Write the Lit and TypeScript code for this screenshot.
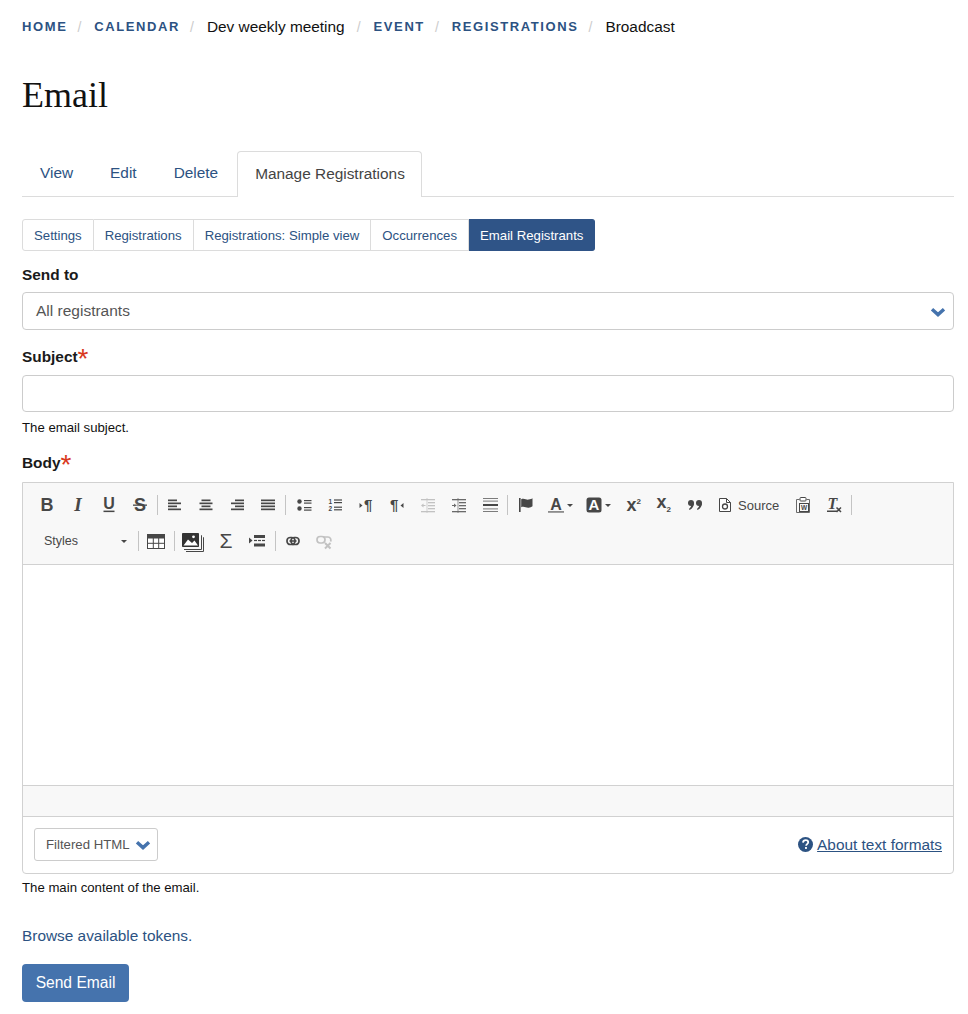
import { LitElement, html, css, svg } from "lit";
import { customElement } from "lit/decorators.js";

const ic = (body: unknown, w = 16, h = 16) => html`<svg class="ic" width=${w} height=${h} viewBox="0 0 ${w} ${h}">${body}</svg>`;
const bars = (rows: [number, number][], op = 1) => svg`<g fill="#474747" opacity=${op}>${rows.map(([x, w], i) => svg`<rect x=${x} y=${2.5 + i * 3} width=${w} height="1.7"/>`)}</g>`;
const chev = html`<svg class="chev" width="16" height="11" viewBox="0 0 16 11"><path d="M2 3.2 L8 8.6 L14 3.2" fill="none" stroke="#4573ad" stroke-width="3.4"/></svg>`;

const glyph = (t: string, cls: string, x = 8, y = 14) => svg`<text class=${cls} x=${x} y=${y} text-anchor="middle">${t}</text>`;

const indentLines = (op: number, arrowRight: boolean) => svg`<g opacity=${op} fill="#474747">
  <rect x="1" y="2" width="14" height="1.3"/><rect x="8" y="5" width="7" height="1.3"/><rect x="8" y="8" width="7" height="1.3"/><rect x="8" y="11" width="7" height="1.3"/><rect x="1" y="14" width="14" height="1.3"/>
  <rect x="6.500" y="1" width="1" height="15" opacity=".7"/>
  <path d=${arrowRight ? "M1 7.900h2V6.500l2.500 2-2.500 2V9.100H1z" : "M5.500 7.900h-2V6.500l-2.500 2 2.500 2V9.100h2z"}/>
</g>`;

const icons = {
  bold: ic(glyph("B", "t-b")),
  italic: ic(glyph("I", "t-i")),
  underline: ic(svg`<text class="t-u" x="8" y="11.500" text-anchor="middle">U</text><rect x="2.500" y="13.600" width="11" height="1.500" fill="#474747"/>`),
  strike: ic(svg`<text class="t-b" x="8" y="14" text-anchor="middle">S</text><rect x="1" y="7.500" width="14" height="1.300" fill="#474747"/>`),
  left: ic(bars([[1, 9], [1, 13], [1, 9], [1, 13]])),
  center: ic(bars([[3.500, 9], [1.500, 13], [3.500, 9], [1.500, 13]])),
  right: ic(bars([[6, 9], [2, 13], [6, 9], [2, 13]])),
  justify: ic(bars([[1, 14], [1, 14], [1, 14], [1, 14]])),
  ul: ic(svg`<g fill="#474747"><circle cx="3.500" cy="4.500" r="2.200"/><circle cx="3.500" cy="11.500" r="2.200"/><rect x="8" y="3" width="7.500" height="1.200"/><rect x="8" y="5.500" width="7.500" height="1.200"/><rect x="8" y="10" width="7.500" height="1.200"/><rect x="8" y="12.500" width="7.500" height="1.200"/></g>`),
  ol: ic(svg`<text class="t-n" x="1.500" y="7.400">1</text><text class="t-n" x="1.500" y="14">2</text><g fill="#474747"><rect x="7" y="2.400" width="8" height="1.200"/><rect x="7" y="5" width="8" height="1.200"/><rect x="7" y="9.600" width="8" height="1.200"/><rect x="7" y="12.200" width="8" height="1.200"/></g>`),
  ltr: ic(svg`<path d="M1.500 6l3 2.500-3 2.500z" fill="#474747"/><text class="t-p" x="6" y="13">¶</text>`),
  rtl: ic(svg`<text class="t-p" x="1" y="13">¶</text><path d="M14.500 6l-3 2.500 3 2.500z" fill="#474747"/>`),
  outdent: ic(indentLines(0.3, false)),
  indent: ic(indentLines(0.8, true)),
  hr: ic(svg`<g fill="#474747"><rect x="1" y="1" width="15" height="1" opacity=".7"/><rect x="1" y="3.600" width="15" height="1" opacity=".7"/><rect x="1" y="7" width="15" height="2"/><rect x="1" y="11.400" width="15" height="1" opacity=".7"/><rect x="1" y="14" width="15" height="1" opacity=".7"/></g>`),
  flag: ic(svg`<g fill="#474747"><rect x="1" y="1" width="1.600" height="14"/><path d="M3.200 2.200c3-1.600 5 1 7.500 .4 1.600-.4 3-.8 3.800-1.400v8c-1 .8-2.400 1.300-3.800 1.500-2.500 .4-4.500-1.900-7.500-.5z"/></g>`),
  color: ic(svg`<text class="t-a" x="8" y="12.500" text-anchor="middle">A</text><rect x="0" y="14" width="16" height="1.800" fill="#8c8c8c"/>`),
  bg: ic(svg`<rect x=".5" y=".5" width="15" height="15" rx="2.500" fill="#474747"/><text class="t-aw" x="8" y="13" text-anchor="middle">A</text>`),
  sup: ic(svg`<text class="t-x" x="1.500" y="14">x</text><text class="t-s" x="11.500" y="7">2</text>`),
  sub: ic(svg`<text class="t-x" x=".5" y="11">x</text><text class="t-s" x="10.500" y="15">2</text>`),
  quote: ic(svg`<g fill="#474747"><circle cx="4" cy="6" r="3"/><path d="M7 6c0 3.200-1.500 5.300-4.300 7l-.8-1c1.500-1.100 2.500-2.700 2.200-4z"/><circle cx="12" cy="6" r="3"/><path d="M15 6c0 3.200-1.500 5.300-4.300 7l-.8-1c1.500-1.100 2.500-2.700 2.200-4z"/></g>`),
  source: ic(svg`<path d="M2.500 1.500h7l4 4v9h-11z" fill="#fff" stroke="#474747"/><circle cx="8" cy="9.500" r="2.500" fill="none" stroke="#474747" stroke-width="1.300"/><path d="M9.500 1.500v4h4" fill="none" stroke="#474747"/>`),
  paste: ic(svg`<path d="M4.500 2.500H1.500v13h13v-13h-3" fill="none" stroke="#6a6a6a"/><rect x="5" y=".5" width="6" height="3.500" rx=".8" fill="#fff" stroke="#474747"/><rect x="4.500" y="6.500" width="9" height="8" fill="#f8f8f8" stroke="#474747"/><text class="t-w" x="9" y="13" text-anchor="middle">W</text>`),
  clear: ic(svg`<text class="t-i2" x="6.500" y="12" text-anchor="middle">T</text><rect x="1" y="13.500" width="10" height="1.500" fill="#474747"/><path d="M10.500 10.500l4.500 4.500m0-4.500l-4.500 4.500" stroke="#474747" stroke-width="1.500"/>`),
  table: ic(svg`<rect x=".5" y="1.500" width="17" height="14" fill="#fff" stroke="#474747"/><rect x="0" y="1" width="18" height="4.500" fill="#474747"/><path d="M6.300 5v10M11.700 5v10M1 10.300h16" stroke="#474747"/>`, 18, 16),
  image: ic(svg`<path d="M19 5.500h.5V19.500H2M21 7.500h.5V21.500H4" fill="none" stroke="#474747"/><rect x="0" y="3" width="17" height="14" rx=".8" fill="#333"/><path d="M1.500 15.500l4.500-6 4 3.500 2.500-2.500 3.500 5z" fill="#fff"/><circle cx="11.500" cy="6.800" r="1.400" fill="#fff"/>`, 23, 22),
  sigma: ic(glyph("Σ", "t-sig", 9, 15.500), 18, 18),
  embed: ic(svg`<path d="M0 4.500l3.500 3-3.500 3z" fill="#474747"/><g fill="#474747"><rect x="5" y="2" width="11" height="3"/><rect x="5" y="6.900" width="3" height="1.200"/><rect x="9" y="6.900" width="3" height="1.200"/><rect x="13" y="6.900" width="3" height="1.200"/><rect x="5" y="10.500" width="11" height="3"/></g>`),
  link: ic(svg`<rect x="2" y="4.500" width="8" height="7" rx="3.300" fill="none" stroke="#474747" stroke-width="1.700"/><rect x="6" y="4.500" width="8" height="7" rx="3.300" fill="none" stroke="#474747" stroke-width="1.700"/><rect x="4.500" y="7.200" width="7" height="1.600" fill="#474747"/>`),
  unlink: ic(svg`<g opacity=".3"><rect x="1" y="3.500" width="8" height="6.500" rx="3.200" fill="none" stroke="#474747" stroke-width="1.700"/><path d="M7 4h5a3 3 0 0 1 2.500 4.500" fill="none" stroke="#474747" stroke-width="1.700"/><path d="M9 10l5.500 5.500m0-5.500L9 15.500" stroke="#474747" stroke-width="2"/></g>`),
};

@customElement("app-root")
export class AppRoot extends LitElement {
  static styles = css`
    :host { display: block; font-family: "Liberation Sans", Arial, sans-serif; color: #111; background: #fff; }
    * { box-sizing: border-box; }
    a { color: #2c5282; text-decoration: none; }
    .page { padding: 18px 14px 12px 22px; height: 1014px; overflow: hidden; }

    .crumbs { display: flex; align-items: center; height: 18px; font-size: 15.400px; line-height: 18px; }
    .crumbs a { font-size: 13px; font-weight: 700; letter-spacing: 1.600px; text-transform: uppercase; }
    .crumbs .sep { color: #ccc; font-size: 14px; margin: 0 13px 0 10px; }
    .crumbs .cur { margin-right: 2px; }
    h1 { margin: 32px 0 0; height: 54px; font: 400 36px/54px "Liberation Serif", serif; color: #111; }

    .primary { display: flex; height: 46px; margin-top: 29px; border-bottom: 1px solid #dcdcdc; font-size: 15.400px; }
    .primary a { display: block; padding: 0 19px 0 18px; line-height: 44px; }
    .primary a.active { color: #444; background: #fff; border: 1px solid #dcdcdc; border-bottom: 0; border-radius: 4px 4px 0 0; height: 46px; padding: 0 16.500px 0 17px; }

    .secondary { display: flex; margin-top: 22px; height: 32px; width: max-content; font-size: 13.200px; }
    .secondary a { display: block; padding: 0 11px; line-height: 31px; border: 1px solid #dcdcdc; border-left: 0; }
    .secondary a:first-child { border-left: 1px solid #dcdcdc; border-radius: 3px 0 0 3px; }
    .secondary a.active { background: #2f5487; border-color: #2f5487; color: #fff; border-radius: 0 3px 3px 0; }

    label { display: block; font-size: 15.400px; font-weight: 700; line-height: 18px; color: #1a1a1a; }
    .req { color: #d9381e; font-size: 28px; font-weight: 400; line-height: 0; vertical-align: -6px; margin-left: 0; }
    .send { margin-top: 15px; }
    .select { display: flex; align-items: center; justify-content: space-between; height: 38px; margin-top: 8px; padding: 0 7px 0 13px; border: 1px solid #ccc; border-radius: 4px; font-size: 15.500px; line-height: 16px; color: #555; }
    .subj { margin-top: 18px; }
    .input { height: 37px; margin-top: 9px; border: 1px solid #ccc; border-radius: 4px; }
    .help { font-size: 13.200px; line-height: 16px; color: #111; }
    .help.a { margin-top: 8px; }
    .bodyl { margin-top: 18px; }

    .editor { margin-top: 10px; height: 392px; border: 1px solid #d1d1d1; border-radius: 0 0 4px 4px; display: flex; flex-direction: column; }
    .toolbar { height: 82px; flex: none; background: #f8f8f8; border-bottom: 1px solid #d1d1d1; padding: 4px 0 0 8px; }
    .row { display: flex; align-items: center; height: 36px; }
    .b { display: flex; align-items: center; justify-content: center; width: 31px; height: 36px; color: #474747; flex: none; }
    .s { width: 1px; height: 20px; background: #c4c4c4; margin: 0 1.500px; flex: none; }
    .s.m { margin: 0 2.500px 0 1.500px; }
    .s.l { margin: 0 2.500px 0 1.500px; }
    .ic { display: block; flex: none; overflow: visible; }
    .ic text { fill: #474747; font-family: "Liberation Sans", sans-serif; }
    .ic .t-b { font-size: 18px; font-weight: 700; }
    .ic .t-u { font-size: 16px; font-weight: 700; }
    .ic .t-i { font-family: "Liberation Serif", serif; font-style: italic; font-weight: 700; font-size: 19px; }
    .ic .t-n { font-size: 6.500px; font-weight: 700; }
    .ic .t-p { font-size: 15px; font-weight: 700; }
    .ic .t-a { font-size: 16px; font-weight: 700; }
    .ic .t-aw { font-size: 15px; font-weight: 700; fill: #fff; }
    .ic .t-x { font-size: 18px; font-weight: 700; }
    .ic .t-s { font-size: 8px; font-weight: 700; }
    .ic .t-w { font-size: 6.500px; font-weight: 700; }
    .ic .t-i2 { font-family: "Liberation Serif", serif; font-style: italic; font-weight: 700; font-size: 16px; }
    .ic .t-sig { font-size: 21px; font-weight: 400; }
    .w { display: flex; align-items: center; height: 36px; color: #474747; flex: none; }
    .caret { width: 0; height: 0; border: 3px solid transparent; border-top: 3px solid #474747; border-bottom: 0; margin-left: 3px; }
    .cw { width: 39px; }
    .cw2 { width: 37px; }
    .srcw { padding-left: 7px; width: 77px; }
    .sigw { width: 42px; margin-right: 1px; }
    .embw { width: 18px; }
    .src { font-size: 13px; margin-left: 5px; color: #474747; }
    .styles { display: flex; align-items: center; justify-content: space-between; width: 98px; padding: 0 2px 0 13px; height: 36px; font-size: 12.500px; color: #474747; flex: none; }
    .sep2a { margin: 0 8px 0 9px; }
    .sep2b { margin: 0 7px 0 9px; }
    .sep2c { margin: 0 1px 0 9px; }
    .content { flex: 1; background: #fff; }
    .foot { height: 32px; flex: none; background: #f8f8f8; border-top: 1px solid #d1d1d1; border-bottom: 1px solid #d1d1d1; }
    .formats { flex: none; height: 56px; display: flex; align-items: flex-start; justify-content: space-between; padding: 11px 11px 0; }
    .fsel { display: flex; align-items: center; gap: 5px; height: 33px; width: 124px; padding: 0 0 0 11px; border: 1px solid #ccc; border-radius: 3px; font-size: 13.200px; color: #555; white-space: nowrap; }
    .about { display: flex; align-items: center; gap: 4px; height: 33px; font-size: 15.400px; }
    .about a { text-decoration: underline; }
    .help.b2 { margin-top: 6px; }
    .tokens { display: block; margin-top: 31px; font-size: 15.400px; line-height: 18px; }
    .btn { display: flex; align-items: center; justify-content: center; width: 107px; height: 38px; margin-top: 19px; background: #4573ad; border-radius: 4px; color: #fff; font-size: 15.600px; }
  `;

  private btn(i: unknown) { return html`<span class="b">${i}</span>`; }

  render() {
    const i = icons;
    const b = (x: unknown) => this.btn(x);
    return html`<div class="page">
      <nav class="crumbs">
        <a href="#">Home</a><span class="sep">/</span>
        <a href="#">Calendar</a><span class="sep">/</span>
        <span class="cur">Dev weekly meeting</span><span class="sep">/</span>
        <a href="#">Event</a><span class="sep">/</span>
        <a href="#">Registrations</a><span class="sep">/</span>
        <span class="cur">Broadcast</span>
      </nav>
      <h1>Email</h1>
      <div class="primary">
        <a href="#">View</a><a href="#">Edit</a><a href="#">Delete</a><a href="#" class="active">Manage Registrations</a>
      </div>
      <div class="secondary">
        <a href="#">Settings</a><a href="#">Registrations</a><a href="#">Registrations: Simple view</a><a href="#">Occurrences</a><a href="#" class="active">Email Registrants</a>
      </div>
      <label class="send">Send to</label>
      <div class="select"><span>All registrants</span>${chev}</div>
      <label class="subj">Subject<span class="req">*</span></label>
      <div class="input"></div>
      <div class="help a">The email subject.</div>
      <label class="bodyl">Body<span class="req">*</span></label>
      <div class="editor">
        <div class="toolbar">
          <div class="row">
            ${b(i.bold)}${b(i.italic)}${b(i.underline)}${b(i.strike)}<span class="s"></span>
            ${b(i.left)}${b(i.center)}${b(i.right)}${b(i.justify)}<span class="s m"></span>
            ${b(i.ul)}${b(i.ol)}${b(i.ltr)}${b(i.rtl)}${b(i.outdent)}${b(i.indent)}${b(i.hr)}<span class="s l"></span>
            ${b(i.flag)}
            <span class="b cw">${i.color}<span class="caret"></span></span>
            <span class="b cw2">${i.bg}<span class="caret"></span></span>
            ${b(i.sup)}${b(i.sub)}${b(i.quote)}
            <span class="w srcw">${i.source}<span class="src">Source</span></span>
            ${b(i.paste)}${b(i.clear)}<span class="s"></span>
          </div>
          <div class="row">
            <span class="styles"><span>Styles</span><span class="caret"></span></span>
            <span class="s sep2a"></span>${i.table}
            <span class="s sep2b"></span>${i.image}
            <span class="b sigw">${i.sigma}</span>
            <span class="b embw">${i.embed}</span>
            <span class="s sep2c"></span>
            ${b(i.link)}${b(i.unlink)}
          </div>
        </div>
        <div class="content"></div>
        <div class="foot"></div>
        <div class="formats">
          <div class="fsel">Filtered HTML ${chev}</div>
          <div class="about">
            <svg width="15" height="15" viewBox="0 0 16 16"><circle cx="8" cy="8" r="8" fill="#2c5282"/><path d="M5.300 6c.2-1.800 1.300-2.700 2.900-2.700s2.700 .9 2.700 2.300c0 2-2.200 2-2.200 3.600" fill="none" stroke="#fff" stroke-width="1.900"/><rect x="7.500" y="10.700" width="2" height="2" fill="#fff"/></svg>
            <a href="#">About text formats</a>
          </div>
        </div>
      </div>
      <div class="help b2">The main content of the email.</div>
      <a class="tokens" href="#">Browse available tokens.</a>
      <div class="btn">Send Email</div>
    </div>`;
  }
}
